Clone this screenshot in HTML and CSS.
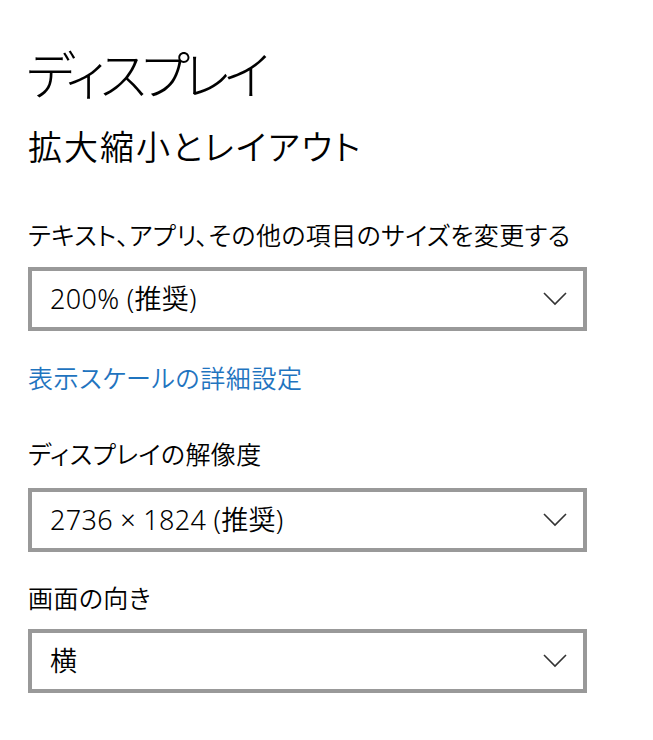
FILE: index.html
```html
<!DOCTYPE html>
<html lang="ja">
<head>
<meta charset="utf-8">
<title>ディスプレイ</title>
<link rel="stylesheet" href="styles.css">
</head>
<body>
<main class="page">
  <h1 class="title">ディスプレイ</h1>
  <h2 class="subtitle">拡大縮小とレイアウト</h2>

  <div class="label label-first">テキスト、アプリ、その他の項目のサイズを変更する</div>
  <div class="select select-first">
    <span class="select-value">200% (推奨)</span>
    <svg class="chevron" width="24" height="14" viewBox="0 0 24 14"><path d="M1 1 L12 12 L23 1" fill="none" stroke="#333" stroke-width="1.6"/></svg>
  </div>

  <a class="link" href="#">表示スケールの詳細設定</a>

  <div class="label label-res">ディスプレイの解像度</div>
  <div class="select select-res">
    <span class="select-value">2736 × 1824 (推奨)</span>
    <svg class="chevron" width="24" height="14" viewBox="0 0 24 14"><path d="M1 1 L12 12 L23 1" fill="none" stroke="#333" stroke-width="1.6"/></svg>
  </div>

  <div class="label label-orient">画面の向き</div>
  <div class="select select-orient">
    <span class="select-value">横</span>
    <svg class="chevron" width="24" height="14" viewBox="0 0 24 14"><path d="M1 1 L12 12 L23 1" fill="none" stroke="#333" stroke-width="1.6"/></svg>
  </div>
</main>
</body>
</html>
```

FILE: styles.css
```css
html, body {
  margin: 0;
  padding: 0;
  background: #ffffff;
}

body {
  font-family: "Noto Sans", "Noto Sans CJK JP", sans-serif;
  color: #000000;
  font-feature-settings: "palt";
}

.page {
  display: flex;
  flex-direction: column;
  align-items: flex-start;
  padding: 45px 66px 0 28px;
}

.title {
  margin: 0 0 0 -2px;
  font-weight: 300;
  font-size: 52px;
  line-height: 60px;
  letter-spacing: -5.5px;
}

.subtitle {
  margin: 22px 0 0;
  font-weight: 350;
  font-size: 34px;
  line-height: 40px;
  letter-spacing: 2px;
}

.label {
  font-size: 25px;
  font-weight: 350;
  line-height: 32px;
  letter-spacing: 0.4px;
}

.label-first { margin-top: 52px; }
.label-res { margin-top: 44px; }
.label-orient { margin-top: 30px; }

.select {
  box-sizing: border-box;
  align-self: stretch;
  height: 64px;
  border: 4px solid #999999;
  display: flex;
  align-items: center;
  justify-content: space-between;
  padding: 0 16px 0 18px;
  background: #ffffff;
}

.select-first { margin-top: 16px; }
.select-res { margin-top: 18px; }
.select-orient { margin-top: 15px; }

.select-value {
  font-size: 27px;
  font-weight: 350;
  line-height: 32px;
  letter-spacing: 0.3px;
}

.chevron {
  display: block;
}

.link {
  margin-top: 31px;
  font-size: 25px;
  font-weight: 350;
  line-height: 32px;
  letter-spacing: 0.6px;
  color: #1f74bf;
  text-decoration: none;
}
```
